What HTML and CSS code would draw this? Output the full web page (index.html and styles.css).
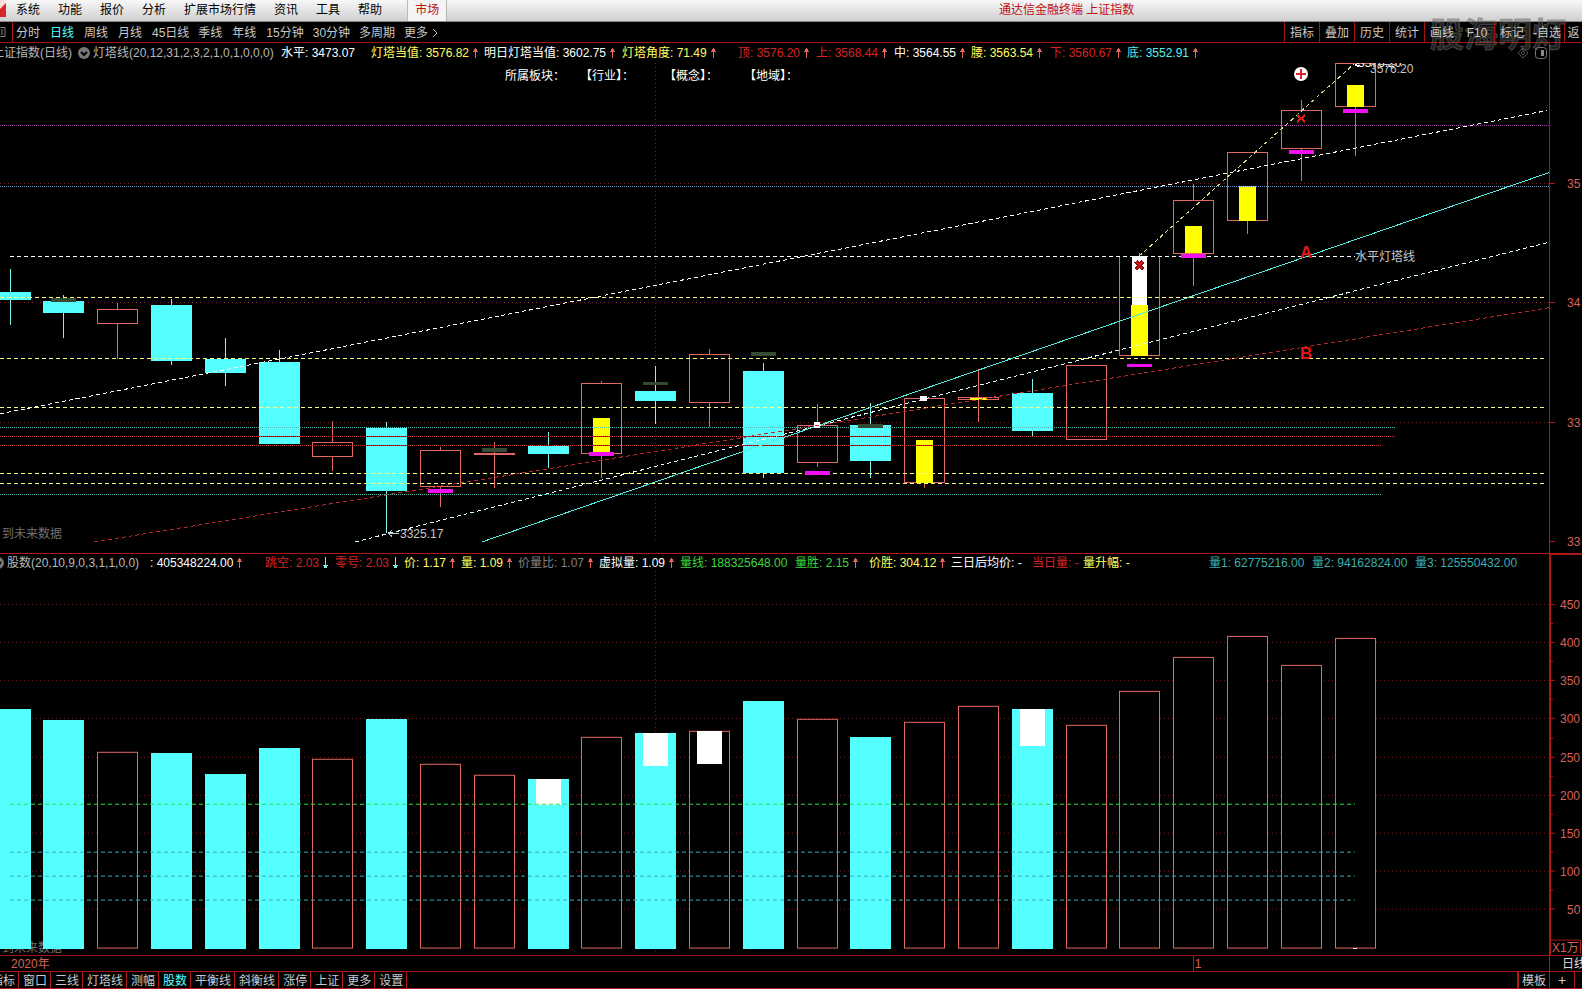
FILE: index.html
```html
<!DOCTYPE html>
<html lang="zh-CN">
<head>
<meta charset="utf-8">
<title>通达信金融终端 上证指数</title>
<link rel="stylesheet" href="styles.css">
</head>
<body>
<svg class="defs" aria-hidden="true">
  <symbol id="up" viewBox="0 0 5 14"><path d="M2 2h1v10H2zM1 3h3v2H1zM0 5h5v1H0z" fill="#e06a60"/></symbol>
  <symbol id="down" viewBox="0 0 5 14"><path d="M2 1h1v11H2zM1 10h3v2H1zM0 9h5v1H0z" fill="#7fe8e0"/></symbol>
  <symbol id="fold" viewBox="0 0 12 12"><circle cx="6" cy="6" r="6" fill="#777"/><path d="M3 5l3 3 3-3" fill="none" stroke="#000" stroke-width="2"/></symbol>
</svg>

<header class="menubar">
  <svg class="logo" viewBox="0 0 6 17"><path d="M0 0h6v17H0z" fill="#d8282a"/><path d="M0 0h6v3L0 9z" fill="#fbe0dc"/></svg>
  <nav class="menus">
    <button>系统</button><button>功能</button><button>报价</button><button>分析</button><button>扩展市场行情</button><button>资讯</button><button>工具</button><button>帮助</button>
  </nav>
  <button class="market">市场</button>
  <h1 class="title">通达信金融终端 上证指数</h1>
</header>

<div class="toolbar">
  <svg class="panel-icon" viewBox="0 0 12 20"><path d="M0 5.500h4.500v9H0M1.500 7v6" fill="none" stroke="#888"/><path d="M12 0v20" stroke="#b01818"/></svg>
  <nav class="periods">
    <button>分时</button><button class="on">日线</button><button>周线</button><button>月线</button><button>45日线</button><button>季线</button><button>年线</button><button>15分钟</button><button>30分钟</button><button>多周期</button><button class="more">更多<svg viewBox="0 0 6 10"><path d="M1 1l4 4-4 4" fill="none" stroke="#bbb"/></svg></button>
  </nav>
  <div class="watermark">股海明灯</div>
  <nav class="tools">
    <button>指标</button><button>叠加</button><button>历史</button><button>统计</button><button>画线</button><button>F10</button><button>标记</button><button>-自选</button><button>返</button>
  </nav>
</div>

<main class="charts">
  <section class="panel price">
    <div class="info info-price">
      <span class="dim cut">上证指数(日线)</span><svg class="fold"><use href="#fold"/></svg>
      <span class="dim">灯塔线(20,12,31,2,3,2,1,0,1,0,0,0)</span>
      <span class="white">水平: 3473.07</span>
      <span class="yellow">灯塔当值: 3576.82<svg><use href="#up"/></svg></span>
      <span class="white">明日灯塔当值: 3602.75<svg><use href="#up"/></svg></span>
      <span class="yellow">灯塔角度: 71.49<svg><use href="#up"/></svg></span>
      <span class="red">顶: 3576.20<svg><use href="#up"/></svg></span>
      <span class="red">上: 3568.44<svg><use href="#up"/></svg></span>
      <span class="white">中: 3564.55<svg><use href="#up"/></svg></span>
      <span class="yellow">腰: 3563.54<svg><use href="#up"/></svg></span>
      <span class="red">下: 3560.67<svg><use href="#up"/></svg></span>
      <span class="cyan">底: 3552.91<svg><use href="#up"/></svg></span>
      <svg class="corner" viewBox="0 0 32 14"><path d="M8 2l5 5-5 5-5-5zM8 5l2 2-2 2-2-2z" fill="none" stroke="#555"/><rect x="20.500" y="1.500" width="11" height="11" rx="3" fill="none" stroke="#777"/><path d="M26 4h3v6h-3z" fill="#888"/></svg>
    </div>
    <div class="plot">
      <div class="board"><span>所属板块：</span><span>【行业】：</span><span>【概念】：</span><span>【地域】：</span></div>
      <svg class="draw" viewBox="0 63 1549 490" preserveAspectRatio="none">
        <g class="grid"><path d="M0 183.500H1549M0 302.500H1549M0 422.500H1549M655.500 63V541"/></g>
        <path class="dn-wick" d="M10.500 269V325M63.500 295V338M171.500 299V365M225.500 338V386M279.500 350V362M386.500 422V533M548.500 432V468M655.500 366V424M763.500 363V478M870.500 403V478M1032.500 379V436"/>
        <path class="up-wick" d="M117.500 303V309M117.500 324V359M332.500 421V442M332.500 457V471M440.500 447V450M440.500 487V507M494.500 442V488M601.500 381V383M601.500 454V478M709.500 349V354M709.500 402V427M817.500 404V425M817.500 463V467M924.500 483V488M978.500 369V422M1139.500 253V257M1193.500 184V200M1193.500 253V286M1247.500 221V234M1301.500 100V110M1301.500 148V181M1355.500 106V156"/>
        <g class="dn">
          <rect x="-10" y="292" width="41" height="8"/><rect x="43" y="301" width="41" height="12"/><rect x="151" y="305" width="41" height="56"/><rect x="205" y="359" width="41" height="14"/><rect x="259" y="362" width="41" height="82"/><rect x="366" y="428" width="41" height="63"/><rect x="528" y="446" width="41" height="8"/><rect x="635" y="391" width="41" height="10"/><rect x="743" y="371" width="41" height="102"/><rect x="850" y="425" width="41" height="36"/><rect x="1012" y="393" width="41" height="38"/>
        </g>
        <g class="up">
          <rect x="97.500" y="309.500" width="40" height="14"/><rect x="312.500" y="442.500" width="40" height="14"/><rect x="420.500" y="450.500" width="40" height="36"/><rect x="474.500" y="453.500" width="40" height="1"/><rect x="581.500" y="383.500" width="40" height="70"/><rect x="689.500" y="354.500" width="40" height="48"/><rect x="797.500" y="425.500" width="40" height="37"/><rect x="904.500" y="398.500" width="40" height="84"/><rect x="958.500" y="397.500" width="40" height="2"/><rect x="1066.500" y="365.500" width="40" height="74"/><path d="M1119.500 257V355.500H1159.500V257"/><rect x="1173.500" y="200.500" width="40" height="53"/><rect x="1227.500" y="152.500" width="40" height="68"/><rect x="1281.500" y="110.500" width="40" height="38"/><rect x="1335.500" y="63.500" width="40" height="43"/>
        </g>
        <g fill="#ffff00">
          <rect x="593" y="418" width="17" height="34"/><rect x="916" y="440" width="17" height="43"/><rect x="970" y="398" width="17" height="2"/><rect x="1131" y="305" width="17" height="51"/><rect x="1185" y="226" width="17" height="27"/><rect x="1239" y="186" width="17" height="35"/><rect x="1347" y="85" width="17" height="22"/>
        </g>
        <rect x="1132" y="256" width="15" height="49" fill="#fff"/>
        <path d="M259 436.500h41M366 436.500h41M366 445.500h41M743 436.500h41M743 445.500h41M850 436.500h41M850 445.500h41M593 436.500h17M593 445.500h17M916 445.500h17" stroke="#301414"/>
        <g class="dots">
          <path d="M0 125.500H1549" stroke="#a03ca0"/><path d="M0 186.500H1549" stroke="#6f98b8"/>
          <path d="M0 427.500H1396M0 494.500H1382" stroke="#4fb8ac"/><path d="M0 436.500H1396M0 445.500H1382" stroke="#c03838"/>
        </g>
        <g class="dash">
          <path d="M0 297.500H1547M0 358.500H1547M0 407.500H1547M0 473.500H1547M0 483.500H1547" stroke="#ffff80"/>
          <path d="M10 256.500H1355" stroke="#fff"/>
          <path d="M0 413.500L1547 110.500" stroke="#fff"/><path d="M355 541.500L1547 242.500" stroke="#dff"/>
          <path d="M94 541.500L1549 307.500" stroke="#b82828"/><path d="M1139 256L1354 64" stroke="#e0e090"/>
        </g>
        <path d="M482 541.500L1549 172.500" class="trend"/>
        <g fill="#f010f0">
          <rect x="428" y="489" width="25" height="4"/><rect x="589" y="452" width="25" height="4"/><rect x="805" y="471" width="25" height="4"/><rect x="1127" y="364" width="25" height="3"/><rect x="1181" y="254" width="25" height="4"/><rect x="1289" y="150" width="25" height="4"/><rect x="1343" y="109" width="25" height="4"/>
        </g>
        <g fill="#344a33">
          <rect x="51" y="298" width="25" height="4"/><rect x="482" y="448" width="25" height="4"/><rect x="643" y="382" width="25" height="3"/><rect x="751" y="352" width="25" height="4"/><rect x="858" y="424" width="25" height="4"/>
        </g>
        <path d="M814 422h6v6h-6zM920 396h7v5h-7z" fill="#fff"/><path d="M815 425.500h4" stroke="#d03030"/>
        <circle cx="1301" cy="74" r="7" fill="#fff"/><path d="M1301 69v10M1296 74h10" stroke="#e02030" stroke-width="2"/>
        <path d="M1297 115l8 7M1305 115l-8 7" stroke="#e01818" stroke-width="2"/>
        <path d="M1136 261l7 8M1143 261l-7 8" stroke="#901010" stroke-width="4"/><path d="M1136 261l7 8M1143 261l-7 8" stroke="#e01818"/>
        <text class="mark" x="1300" y="258">A</text><text class="mark" x="1300" y="359">B</text>
        <path d="M388 533h11M388 533l4-3M388 533l4 3" fill="none" stroke="#ccc"/><text x="400" y="538">3325.17</text>
        <path d="M1355 65h5M1355 65l4-2M1355 65l4 2" fill="none" stroke="#fff"/><text class="peak" x="1358" y="67">3576.20</text><text x="1370" y="73">3576.20</text>
        <text x="1355" y="261">水平灯塔线</text><text class="note" x="2" y="538">到未来数据</text>
      </svg>
    </div>
    <svg class="axis" viewBox="1549 43 33 510" preserveAspectRatio="none">
      <path d="M1549.500 43V553M1550 183.500h5M1550 302.500h5M1550 422.500h5M1550 541.500h5"/>
      <text x="1567" y="188">35</text><text x="1567" y="307">34</text><text x="1567" y="427">33</text><text x="1567" y="546">33</text>
    </svg>
  </section>

  <section class="panel volume">
    <div class="info info-volume">
      <svg class="fold"><use href="#fold"/></svg>
      <span class="dim">股数(20,10,9,0,3,1,1,0,0)</span>
      <span class="white">: 405348224.00<svg><use href="#up"/></svg></span>
      <span class="red">跳空: 2.03<svg><use href="#down"/></svg></span>
      <span class="red">零号: 2.03<svg><use href="#down"/></svg></span>
      <span class="yellow">价: 1.17<svg><use href="#up"/></svg></span>
      <span class="yellow">量: 1.09<svg><use href="#up"/></svg></span>
      <span class="gray">价量比: 1.07<svg><use href="#up"/></svg></span>
      <span class="white">虚拟量: 1.09<svg><use href="#up"/></svg></span>
      <span class="green">量线: 188325648.00</span>
      <span class="green">量胜: 2.15<svg><use href="#up"/></svg></span>
      <span class="yellow">价胜: 304.12<svg><use href="#up"/></svg></span>
      <span class="white">三日后均价: -</span>
      <span class="red">当日量: -</span>
      <span class="yellow">量升幅: -</span>
      <span class="teal">量1: 62775216.00</span>
      <span class="teal">量2: 94162824.00</span>
      <span class="teal">量3: 125550432.00</span>
    </div>
    <div class="plot">
      <svg class="draw" viewBox="0 571 1549 384" preserveAspectRatio="none">
        <g class="grid"><path d="M0 604.500H1549M0 642.500H1549M0 680.500H1549M0 718.500H1549M0 757.500H1549M0 795.500H1549M0 833.500H1549M0 871.500H1549M0 909.500H1549M655.500 571V955"/></g>
        <text class="note" x="2" y="952">到未来数据</text>
        <g class="dn">
          <rect x="-10" y="709" width="41" height="240"/><rect x="43" y="720" width="41" height="229"/><rect x="151" y="753" width="41" height="196"/><rect x="205" y="774" width="41" height="175"/><rect x="259" y="748" width="41" height="201"/><rect x="366" y="719" width="41" height="230"/><rect x="528" y="779" width="41" height="170"/><rect x="635" y="733" width="41" height="216"/><rect x="743" y="701" width="41" height="248"/><rect x="850" y="737" width="41" height="212"/><rect x="1012" y="709" width="41" height="240"/>
        </g>
        <g class="up">
          <rect x="97.500" y="752.500" width="40" height="196"/><rect x="312.500" y="759.500" width="40" height="189"/><rect x="420.500" y="764.500" width="40" height="184"/><rect x="474.500" y="775.500" width="40" height="173"/><rect x="581.500" y="737.500" width="40" height="211"/><rect x="689.500" y="731.500" width="40" height="217"/><rect x="797.500" y="719.500" width="40" height="229"/><rect x="904.500" y="722.500" width="40" height="226"/><rect x="958.500" y="706.500" width="40" height="242"/><rect x="1066.500" y="725.500" width="40" height="223"/><rect x="1119.500" y="691.500" width="40" height="257"/><rect x="1173.500" y="657.500" width="40" height="291"/><rect x="1227.500" y="636.500" width="40" height="312"/><rect x="1281.500" y="665.500" width="40" height="283"/><rect x="1335.500" y="638.500" width="40" height="310"/>
        </g>
        <g fill="#fff">
          <rect x="536" y="779" width="25" height="26"/><rect x="643" y="733" width="25" height="33"/><rect x="697" y="731" width="25" height="33"/><rect x="1020" y="709" width="25" height="37"/><rect x="1353" y="948" width="4" height="1"/>
        </g>
        <g class="dash"><path d="M10 804.500H1355" stroke="#30e040"/><path d="M10 852.500H1355M10 876.500H1355M10 900.500H1355" stroke="#3aaeb0"/></g>
      </svg>
    </div>
    <svg class="axis" viewBox="1549 554 33 401" preserveAspectRatio="none">
      <path d="M1550 554V955" stroke-width="2"/>
      <path d="M1549 554.500h33M1551 604.500h4M1551 642.500h4M1551 680.500h4M1551 718.500h4M1551 757.500h4M1551 795.500h4M1551 833.500h4M1551 871.500h4M1551 909.500h4M1551 623.500h2M1551 661.500h2M1551 699.500h2M1551 738.500h2M1551 776.500h2M1551 814.500h2M1551 852.500h2M1551 890.500h2"/>
      <text x="1560" y="609">450</text><text x="1560" y="647">400</text><text x="1560" y="685">350</text><text x="1560" y="723">300</text><text x="1560" y="762">250</text><text x="1560" y="800">200</text><text x="1560" y="838">150</text><text x="1560" y="876">100</text><text x="1567" y="914">50</text>
      <path d="M1551 940.500h29.500V954"/><text x="1552" y="952">X1万</text>
    </svg>
  </section>
</main>

<div class="dates">
  <span class="year">2020年</span><span class="month">1</span><span class="unit">日线</span>
</div>

<footer class="tabs">
  <nav class="tablist">
    <button>指标</button><button>窗口</button><button>三线</button><button>灯塔线</button><button>测幅</button><button class="on">股数</button><button>平衡线</button><button>斜衡线</button><button>涨停</button><button>上证</button><button>更多</button><button>设置</button>
  </nav>
  <button class="template">模板</button><button class="plus" aria-label="添加">+</button>
</footer>
</body>
</html>
```
FILE: styles.css
```css
* { box-sizing: border-box; }

body {
  margin: 0;
  height: 100vh;
  display: flex;
  flex-direction: column;
  overflow: hidden;
  background: #000;
  color: #c8c8c8;
  font: 12px/16px "Liberation Sans", "Noto Sans CJK SC", sans-serif;
  white-space: nowrap;
}

button {
  margin: 0;
  padding: 0;
  border: 0;
  background: none;
  color: inherit;
  font: inherit;
  white-space: nowrap;
}

.defs { position: absolute; width: 0; height: 0; }

/* menu bar */
.menubar {
  display: flex;
  flex: none;
  height: 22px;
  background: linear-gradient(#f8f8f8, #cfcfcf);
  border-bottom: 1px solid #8a8a8a;
  color: #000;
}
.logo { width: 6px; height: 17px; }
.menus { display: flex; gap: 18px; margin-left: 10px; padding-bottom: 1px; }
.market {
  margin-left: 25px;
  padding: 0 7px 1px;
  background: #f4f4f4;
  border: solid #b8b8b8;
  border-width: 0 1px;
  color: #c01010;
}
.title {
  margin: 0 28.300% 0 auto;
  padding-top: 2px;
  color: #c01010;
  font: inherit;
}

/* period toolbar */
.toolbar {
  position: relative;
  display: flex;
  flex: none;
  height: 21px;
  border-bottom: 1px solid #a01414;
}
.panel-icon { width: 13px; height: 20px; }
.periods { display: flex; gap: 9px; margin-left: 3px; }
.periods button { min-width: 25px; padding-top: 1px; text-align: left; }
.periods .more { display: flex; align-items: center; gap: 4px; }
.more svg { width: 6px; height: 10px; }
.on { color: #55ffff; }
.tools { position: relative; display: flex; margin-left: auto; }
.tools button { width: 35px; padding-top: 1px; border-left: 1px solid #a01414; }
.tools button:last-child { width: 18px; overflow: hidden; }
.watermark {
  position: absolute;
  top: -10px;
  right: 16px;
  color: rgba(90, 90, 90, 0.4);
  font-size: 34px;
  font-weight: bold;
  line-height: 46px;
  -webkit-text-stroke: 1px rgba(110, 110, 110, 0.5);
}

/* charts */
.charts { display: flex; flex: 1; flex-direction: column; min-height: 0; }
.panel { display: grid; grid-template-columns: minmax(0, 1fr) 33px; min-height: 0; }
.price { flex: 511 1 0; grid-template-rows: 20px minmax(0, 1fr); border-bottom: 1px solid #b01818; }
.volume { flex: 401 1 0; grid-template-rows: 17px minmax(0, 1fr); }
.plot { position: relative; min-height: 0; }
.draw, .axis { display: block; width: 100%; height: 100%; }
.draw { position: absolute; inset: 0; }
.axis { grid-column: 2; grid-row: 1 / 3; }
.board {
  position: absolute;
  z-index: 1;
  top: 5px;
  left: 505px;
  display: grid;
  grid-template-columns: 75px 84px 80px 60px;
  color: #fff;
}

.info { display: grid; align-items: center; position: relative; overflow: hidden; }
.info > span { display: flex; align-items: center; }
.info span svg { width: 5px; height: 14px; margin-left: 4px; }
.info-price {
  grid-template-columns: 78px 15px 188px 90px 113px 138px 116px 78px 78px 77px 79px 77px 1fr 34px;
}
.info-volume {
  grid-template-columns: 7px 143px 115px 70px 69px 57px 57px 81px 81px 115px 74px 82px 81px 51px 126px 103px 103px 1fr;
}
.fold { width: 12px; height: 12px; }
.info-volume .fold { margin-left: -8px; }
.info .cut { margin-left: -8px; }
.corner { width: 32px; height: 14px; }

.dim { color: #b8b8b8; }
.white { color: #fff; }
.yellow { color: #ffff60; }
.red { color: #d82424; }
.cyan { color: #55f0f0; }
.green { color: #3cd83c; }
.gray { color: #808080; }
.teal { color: #3aaeae; }

/* chart marks */
.draw path, .draw rect, .axis path { shape-rendering: crispEdges; }
.draw text { fill: #c8c8c8; }
.draw .peak { fill: #fff; }
.draw .note { fill: #707070; }
.draw .mark { fill: #e01818; font-size: 17px; font-weight: bold; }
.grid { fill: none; stroke: #781818; stroke-dasharray: 1 3; }
.dn { fill: #55ffff; }
.dn-wick { stroke: #7ff4f0; }
.up { fill: #000; stroke: #e06860; }
.up-wick { stroke: #e06860; }
.dots { fill: none; stroke-dasharray: 1 1; }
.dash { fill: none; stroke-dasharray: 4 3; }
.trend { stroke: #58e8e0; }
.axis path { fill: none; stroke: #b01818; }
.axis text { fill: #d86058; }

/* date strip */
.dates {
  display: grid;
  flex: none;
  grid-template-columns: 75.400% 1fr 33px;
  height: 16px;
  border-top: 1px solid #a01414;
  color: #d86058;
  line-height: 16px;
}
.year { padding-left: 11px; }
.month { justify-self: start; padding-left: 1px; border-left: 1px solid #b01818; }
.unit { padding-left: 12px; border-left: 1px solid #b01818; color: #ddd; overflow: hidden; }

/* indicator tabs */
.tabs {
  display: flex;
  flex: none;
  height: 18px;
  border: solid #b01818;
  border-width: 1px 0;
}
.tablist { display: flex; margin-left: -13px; }
.tablist button { padding: 1px 3px 0 4px; border-right: 1px solid #b01818; }
.template { margin-left: auto; padding: 1px 3px 0; border-left: 2px solid #b01818; }
.plus { width: 26px; margin-right: 7px; border: solid #b01818; border-width: 0 1px; font-size: 14px; }
```
